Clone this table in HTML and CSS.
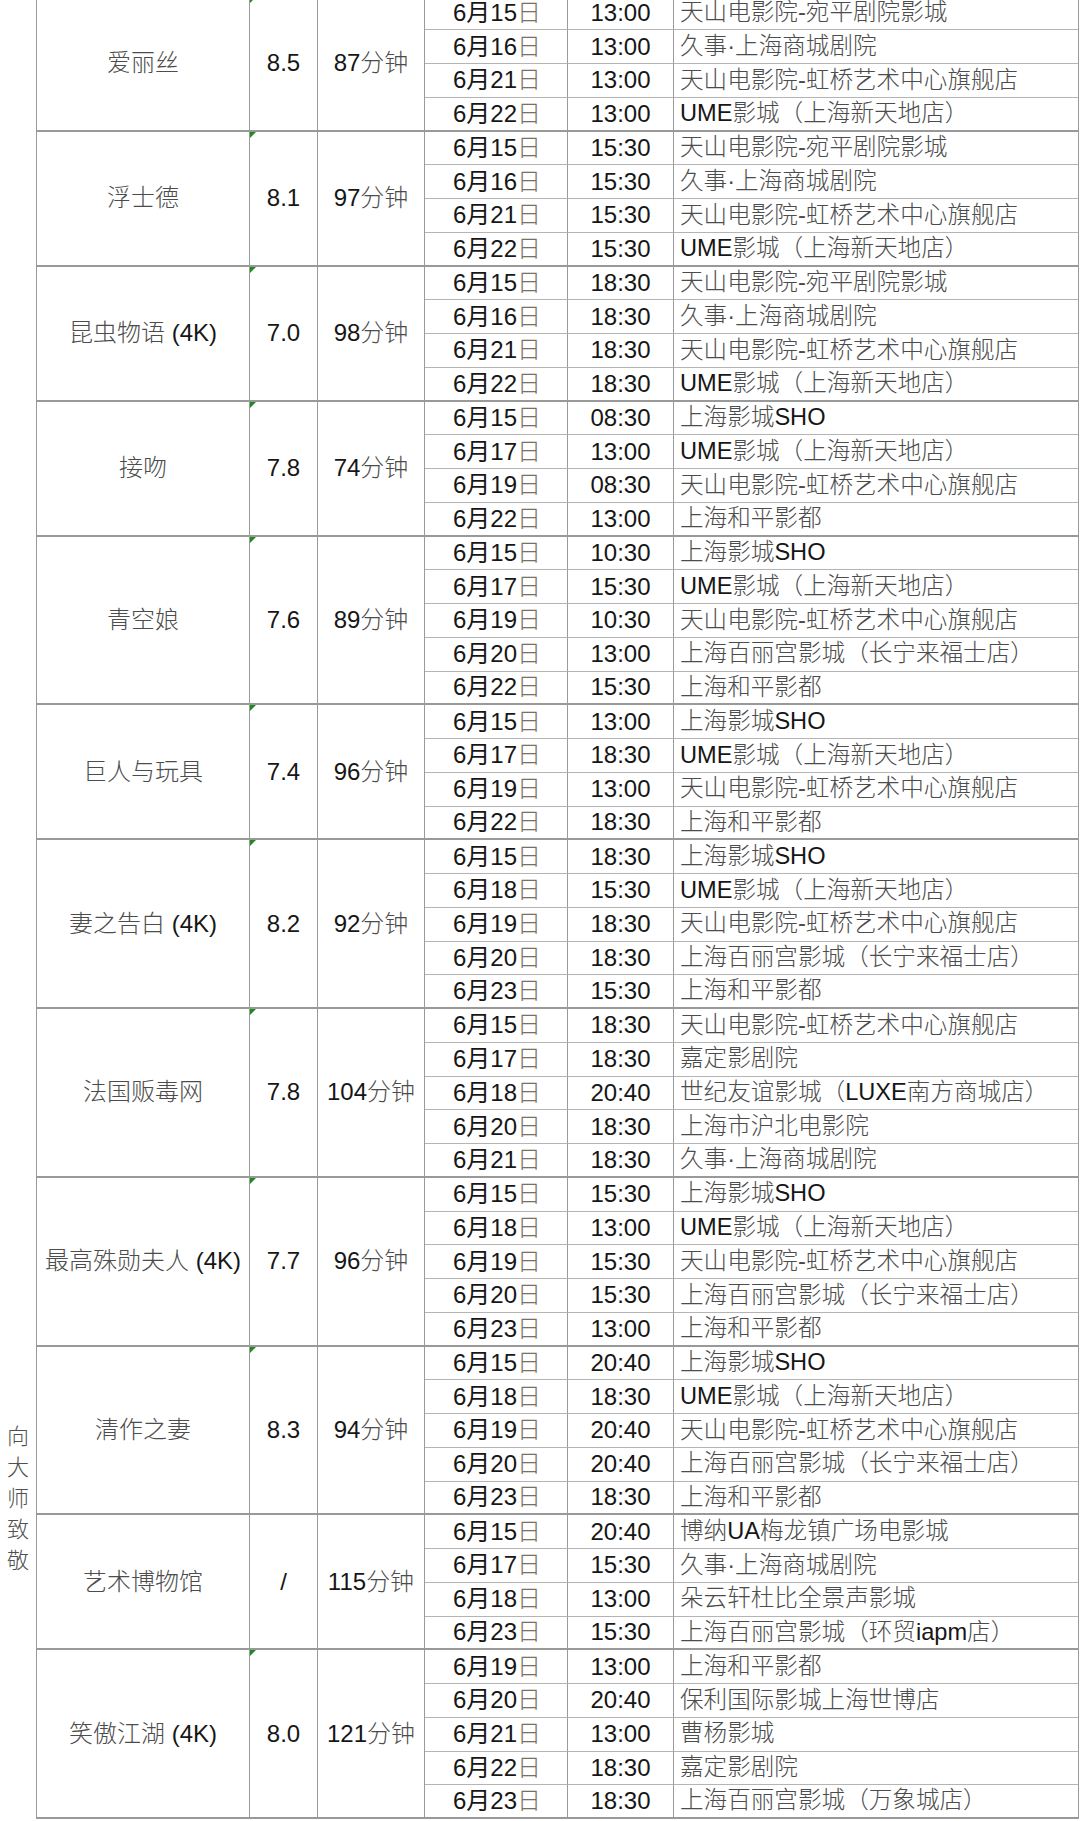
FILE: index.html
```html
<!DOCTYPE html>
<html lang="zh-CN">
<head>
<meta charset="utf-8">
<title>向大师致敬 排片表</title>
<link rel="stylesheet" href="styles.css">
</head>
<body>
<div class="sheet">
  <div class="cat"><span class="cat-text">向大师致敬</span></div>

  <div class="c name r4"><span class="zh">爱丽丝</span></div>
  <div class="c rate r4 flag">8.5</div>
  <div class="c dur r4">87<span class="zh">分钟</span></div>
  <div class="c date">6月15<span class="ri">日</span></div><div class="c time">13:00</div><div class="c cin">天山电影院-宛平剧院影城</div>
  <div class="c date">6月16<span class="ri">日</span></div><div class="c time">13:00</div><div class="c cin">久事·上海商城剧院</div>
  <div class="c date">6月21<span class="ri">日</span></div><div class="c time">13:00</div><div class="c cin">天山电影院-虹桥艺术中心旗舰店</div>
  <div class="c date last">6月22<span class="ri">日</span></div><div class="c time last">13:00</div><div class="c cin last"><span class="en">UME</span>影城（上海新天地店）</div>

  <div class="c name r4"><span class="zh">浮士德</span></div>
  <div class="c rate r4 flag">8.1</div>
  <div class="c dur r4">97<span class="zh">分钟</span></div>
  <div class="c date">6月15<span class="ri">日</span></div><div class="c time">15:30</div><div class="c cin">天山电影院-宛平剧院影城</div>
  <div class="c date">6月16<span class="ri">日</span></div><div class="c time">15:30</div><div class="c cin">久事·上海商城剧院</div>
  <div class="c date">6月21<span class="ri">日</span></div><div class="c time">15:30</div><div class="c cin">天山电影院-虹桥艺术中心旗舰店</div>
  <div class="c date last">6月22<span class="ri">日</span></div><div class="c time last">15:30</div><div class="c cin last"><span class="en">UME</span>影城（上海新天地店）</div>

  <div class="c name r4"><span class="zh">昆虫物语</span>&nbsp;(4K)</div>
  <div class="c rate r4 flag">7.0</div>
  <div class="c dur r4">98<span class="zh">分钟</span></div>
  <div class="c date">6月15<span class="ri">日</span></div><div class="c time">18:30</div><div class="c cin">天山电影院-宛平剧院影城</div>
  <div class="c date">6月16<span class="ri">日</span></div><div class="c time">18:30</div><div class="c cin">久事·上海商城剧院</div>
  <div class="c date">6月21<span class="ri">日</span></div><div class="c time">18:30</div><div class="c cin">天山电影院-虹桥艺术中心旗舰店</div>
  <div class="c date last">6月22<span class="ri">日</span></div><div class="c time last">18:30</div><div class="c cin last"><span class="en">UME</span>影城（上海新天地店）</div>

  <div class="c name r4"><span class="zh">接吻</span></div>
  <div class="c rate r4 flag">7.8</div>
  <div class="c dur r4">74<span class="zh">分钟</span></div>
  <div class="c date">6月15<span class="ri">日</span></div><div class="c time">08:30</div><div class="c cin">上海影城<span class="en">SHO</span></div>
  <div class="c date">6月17<span class="ri">日</span></div><div class="c time">13:00</div><div class="c cin"><span class="en">UME</span>影城（上海新天地店）</div>
  <div class="c date">6月19<span class="ri">日</span></div><div class="c time">08:30</div><div class="c cin">天山电影院-虹桥艺术中心旗舰店</div>
  <div class="c date last">6月22<span class="ri">日</span></div><div class="c time last">13:00</div><div class="c cin last">上海和平影都</div>

  <div class="c name r5"><span class="zh">青空娘</span></div>
  <div class="c rate r5 flag">7.6</div>
  <div class="c dur r5">89<span class="zh">分钟</span></div>
  <div class="c date">6月15<span class="ri">日</span></div><div class="c time">10:30</div><div class="c cin">上海影城<span class="en">SHO</span></div>
  <div class="c date">6月17<span class="ri">日</span></div><div class="c time">15:30</div><div class="c cin"><span class="en">UME</span>影城（上海新天地店）</div>
  <div class="c date">6月19<span class="ri">日</span></div><div class="c time">10:30</div><div class="c cin">天山电影院-虹桥艺术中心旗舰店</div>
  <div class="c date">6月20<span class="ri">日</span></div><div class="c time">13:00</div><div class="c cin">上海百丽宫影城（长宁来福士店）</div>
  <div class="c date last">6月22<span class="ri">日</span></div><div class="c time last">15:30</div><div class="c cin last">上海和平影都</div>

  <div class="c name r4"><span class="zh">巨人与玩具</span></div>
  <div class="c rate r4 flag">7.4</div>
  <div class="c dur r4">96<span class="zh">分钟</span></div>
  <div class="c date">6月15<span class="ri">日</span></div><div class="c time">13:00</div><div class="c cin">上海影城<span class="en">SHO</span></div>
  <div class="c date">6月17<span class="ri">日</span></div><div class="c time">18:30</div><div class="c cin"><span class="en">UME</span>影城（上海新天地店）</div>
  <div class="c date">6月19<span class="ri">日</span></div><div class="c time">13:00</div><div class="c cin">天山电影院-虹桥艺术中心旗舰店</div>
  <div class="c date last">6月22<span class="ri">日</span></div><div class="c time last">18:30</div><div class="c cin last">上海和平影都</div>

  <div class="c name r5"><span class="zh">妻之告白</span>&nbsp;(4K)</div>
  <div class="c rate r5 flag">8.2</div>
  <div class="c dur r5">92<span class="zh">分钟</span></div>
  <div class="c date">6月15<span class="ri">日</span></div><div class="c time">18:30</div><div class="c cin">上海影城<span class="en">SHO</span></div>
  <div class="c date">6月18<span class="ri">日</span></div><div class="c time">15:30</div><div class="c cin"><span class="en">UME</span>影城（上海新天地店）</div>
  <div class="c date">6月19<span class="ri">日</span></div><div class="c time">18:30</div><div class="c cin">天山电影院-虹桥艺术中心旗舰店</div>
  <div class="c date">6月20<span class="ri">日</span></div><div class="c time">18:30</div><div class="c cin">上海百丽宫影城（长宁来福士店）</div>
  <div class="c date last">6月23<span class="ri">日</span></div><div class="c time last">15:30</div><div class="c cin last">上海和平影都</div>

  <div class="c name r5"><span class="zh">法国贩毒网</span></div>
  <div class="c rate r5 flag">7.8</div>
  <div class="c dur r5">104<span class="zh">分钟</span></div>
  <div class="c date">6月15<span class="ri">日</span></div><div class="c time">18:30</div><div class="c cin">天山电影院-虹桥艺术中心旗舰店</div>
  <div class="c date">6月17<span class="ri">日</span></div><div class="c time">18:30</div><div class="c cin">嘉定影剧院</div>
  <div class="c date">6月18<span class="ri">日</span></div><div class="c time">20:40</div><div class="c cin">世纪友谊影城（<span class="en">LUXE</span>南方商城店）</div>
  <div class="c date">6月20<span class="ri">日</span></div><div class="c time">18:30</div><div class="c cin">上海市沪北电影院</div>
  <div class="c date last">6月21<span class="ri">日</span></div><div class="c time last">18:30</div><div class="c cin last">久事·上海商城剧院</div>

  <div class="c name r5"><span class="zh">最高殊勋夫人</span>&nbsp;(4K)</div>
  <div class="c rate r5 flag">7.7</div>
  <div class="c dur r5">96<span class="zh">分钟</span></div>
  <div class="c date">6月15<span class="ri">日</span></div><div class="c time">15:30</div><div class="c cin">上海影城<span class="en">SHO</span></div>
  <div class="c date">6月18<span class="ri">日</span></div><div class="c time">13:00</div><div class="c cin"><span class="en">UME</span>影城（上海新天地店）</div>
  <div class="c date">6月19<span class="ri">日</span></div><div class="c time">15:30</div><div class="c cin">天山电影院-虹桥艺术中心旗舰店</div>
  <div class="c date">6月20<span class="ri">日</span></div><div class="c time">15:30</div><div class="c cin">上海百丽宫影城（长宁来福士店）</div>
  <div class="c date last">6月23<span class="ri">日</span></div><div class="c time last">13:00</div><div class="c cin last">上海和平影都</div>

  <div class="c name r5"><span class="zh">清作之妻</span></div>
  <div class="c rate r5 flag">8.3</div>
  <div class="c dur r5">94<span class="zh">分钟</span></div>
  <div class="c date">6月15<span class="ri">日</span></div><div class="c time">20:40</div><div class="c cin">上海影城<span class="en">SHO</span></div>
  <div class="c date">6月18<span class="ri">日</span></div><div class="c time">18:30</div><div class="c cin"><span class="en">UME</span>影城（上海新天地店）</div>
  <div class="c date">6月19<span class="ri">日</span></div><div class="c time">20:40</div><div class="c cin">天山电影院-虹桥艺术中心旗舰店</div>
  <div class="c date">6月20<span class="ri">日</span></div><div class="c time">20:40</div><div class="c cin">上海百丽宫影城（长宁来福士店）</div>
  <div class="c date last">6月23<span class="ri">日</span></div><div class="c time last">18:30</div><div class="c cin last">上海和平影都</div>

  <div class="c name r4"><span class="zh">艺术博物馆</span></div>
  <div class="c rate r4">/</div>
  <div class="c dur r4">115<span class="zh">分钟</span></div>
  <div class="c date">6月15<span class="ri">日</span></div><div class="c time">20:40</div><div class="c cin">博纳<span class="en">UA</span>梅龙镇广场电影城</div>
  <div class="c date">6月17<span class="ri">日</span></div><div class="c time">15:30</div><div class="c cin">久事·上海商城剧院</div>
  <div class="c date">6月18<span class="ri">日</span></div><div class="c time">13:00</div><div class="c cin">朵云轩杜比全景声影城</div>
  <div class="c date last">6月23<span class="ri">日</span></div><div class="c time last">15:30</div><div class="c cin last">上海百丽宫影城（环贸<span class="en">iapm</span>店）</div>

  <div class="c name r5"><span class="zh">笑傲江湖</span>&nbsp;(4K)</div>
  <div class="c rate r5 flag">8.0</div>
  <div class="c dur r5">121<span class="zh">分钟</span></div>
  <div class="c date">6月19<span class="ri">日</span></div><div class="c time">13:00</div><div class="c cin">上海和平影都</div>
  <div class="c date">6月20<span class="ri">日</span></div><div class="c time">20:40</div><div class="c cin">保利国际影城上海世博店</div>
  <div class="c date">6月21<span class="ri">日</span></div><div class="c time">13:00</div><div class="c cin">曹杨影城</div>
  <div class="c date">6月22<span class="ri">日</span></div><div class="c time">18:30</div><div class="c cin">嘉定影剧院</div>
  <div class="c date last">6月23<span class="ri">日</span></div><div class="c time last">18:30</div><div class="c cin last">上海百丽宫影城（万象城店）</div>
</div>
</body>
</html>
```

FILE: styles.css
```css
html, body {
  margin: 0;
  padding: 0;
  background: #ffffff;
}

body {
  font-family: "Liberation Sans", "Noto Sans CJK SC", sans-serif;
  color: #161616;
  overflow: hidden;
}

.sheet {
  display: grid;
  grid-template-columns: 36px 214px 68px 107px 143px 106px 405px;
  grid-template-rows: repeat(54, 33.75px);
  width: 1079px;
  margin-top: -3.5px;
}

.cat {
  grid-column: 1;
  grid-row: 1 / -1;
  display: flex;
  justify-content: center;
  padding-top: 1424px;
  box-sizing: border-box;
}

.cat-text {
  display: block;
  width: 22px;
  font-size: 22px;
  line-height: 31px;
  color: #505050;
  font-weight: 300;
  word-break: break-all;
  text-align: center;
}

.c {
  box-sizing: border-box;
  display: flex;
  align-items: center;
  justify-content: center;
  white-space: nowrap;
  font-size: 24px;
  line-height: 1;
  border-right: 1px solid #9a9a9a;
  border-bottom: 1px solid #b4b4b4;
}

.r4 { grid-row: span 4; }
.r5 { grid-row: span 5; }

.name {
  grid-column: 2;
  border-left: 1px solid #9a9a9a;
  border-bottom: 2px solid #999999;
}

.rate {
  grid-column: 3;
  position: relative;
  border-bottom: 2px solid #999999;
}

.flag::before {
  content: "";
  position: absolute;
  top: 0;
  left: 0;
  width: 0;
  height: 0;
  border-top: 6px solid #1f8a1f;
  border-right: 6px solid transparent;
}

.dur {
  grid-column: 4;
  border-bottom: 2px solid #999999;
}

.date { grid-column: 5; padding-left: 2px; }
.time { grid-column: 6; }

.cin {
  grid-column: 7;
  justify-content: flex-start;
  padding-left: 6px;
  font-size: 23.6px;
  color: #4c4c4c;
  font-weight: 300;
}

.last {
  border-bottom: 2px solid #999999;
}

.zh {
  color: #4c4c4c;
  font-weight: 300;
}

.ri {
  color: #7a705e;
  font-weight: 300;
}

.en {
  color: #161616;
  font-weight: 400;
}
```
